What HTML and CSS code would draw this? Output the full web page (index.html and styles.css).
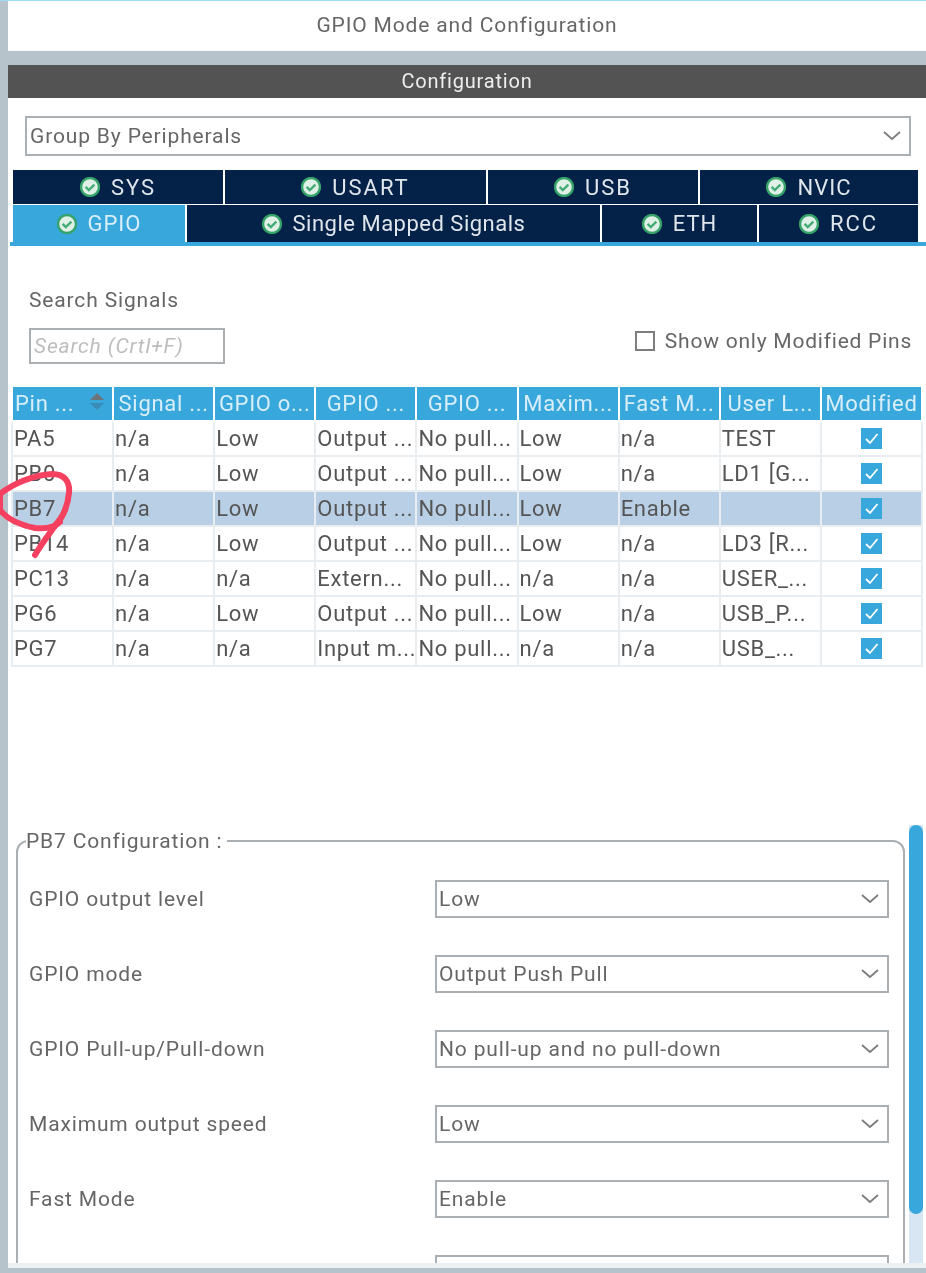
FILE: index.html
```html
<!DOCTYPE html>
<html>

<head>
    <title>GPIO Mode and Configuration</title>
    <link rel="stylesheet" href="styles.css">
</head>

<body>
    <svg class="defs" width="0" height="0">
        <symbol id="tab-check" viewBox="0 0 20 20">
            <circle cx="10" cy="10" r="9" fill="#dff0e6" stroke="#35a369" stroke-width="2.4" />
            <path d="M5.6 9.8l3.2 3.2 5.6-5.4" fill="none" stroke="#45ab76" stroke-width="2.4" />
        </symbol>
        <symbol id="chevron" viewBox="0 0 18 10">
            <path d="M1 1l8 7 8-7" fill="none" stroke="#7d7d7d" stroke-width="1.8" />
        </symbol>
        <symbol id="tick" viewBox="0 0 21 21">
            <rect width="21" height="21" fill="#37a7dc" />
            <path d="M5 11l4 4 7.5-9" fill="none" stroke="#fff" stroke-width="1.8" />
        </symbol>
    </svg>

    <div class="app">
        <div class="title">GPIO Mode and Configuration</div>
        <div class="config-head">Configuration</div>

        <div class="config">
            <div class="select group-select">
                <span>Group By Peripherals</span>
                <svg class="chevron"><use href="#chevron" /></svg>
            </div>

            <div class="tabs tabs-top">
                <div class="tab"><svg class="tab-icon"><use href="#tab-check" /></svg>SYS</div>
                <div class="tab"><svg class="tab-icon"><use href="#tab-check" /></svg>USART</div>
                <div class="tab"><svg class="tab-icon"><use href="#tab-check" /></svg>USB</div>
                <div class="tab tab-tight"><svg class="tab-icon"><use href="#tab-check" /></svg>NVIC</div>
            </div>
            <div class="tabs tabs-bottom">
                <div class="tab tab-tight active"><svg class="tab-icon"><use href="#tab-check" /></svg>GPIO</div>
                <div class="tab tab-long"><svg class="tab-icon"><use href="#tab-check" /></svg>Single Mapped Signals</div>
                <div class="tab tab-tight"><svg class="tab-icon"><use href="#tab-check" /></svg>ETH</div>
                <div class="tab"><svg class="tab-icon"><use href="#tab-check" /></svg>RCC</div>
            </div>
            <div class="tab-line"></div>

            <div class="search-row">
                <div>
                    <div class="search-label">Search Signals</div>
                    <div class="search-box">Search (Crtl+F)</div>
                </div>
                <div class="modified-toggle"><span class="checkbox"></span>Show only Modified Pins</div>
            </div>

            <table class="pins">
                <tr>
                    <th class="sort-head">Pin ...<span class="sort"><i class="up"></i><i class="down"></i></span></th>
                    <th>Signal ...</th>
                    <th>GPIO o...</th>
                    <th>GPIO ...</th>
                    <th>GPIO ...</th>
                    <th>Maxim...</th>
                    <th>Fast M...</th>
                    <th>User L...</th>
                    <th>Modified</th>
                </tr>
                <tr>
                    <td>PA5</td><td>n/a</td><td>Low</td><td>Output ...</td><td>No pull...</td><td>Low</td><td>n/a</td><td>TEST</td>
                    <td class="tick-cell"><svg class="tick"><use href="#tick" /></svg></td>
                </tr>
                <tr>
                    <td>PB0</td><td>n/a</td><td>Low</td><td>Output ...</td><td>No pull...</td><td>Low</td><td>n/a</td><td>LD1 [G...</td>
                    <td class="tick-cell"><svg class="tick"><use href="#tick" /></svg></td>
                </tr>
                <tr class="selected">
                    <td>PB7</td><td>n/a</td><td>Low</td><td>Output ...</td><td>No pull...</td><td>Low</td><td>Enable</td><td></td>
                    <td class="tick-cell"><svg class="tick"><use href="#tick" /></svg></td>
                </tr>
                <tr>
                    <td>PB14</td><td>n/a</td><td>Low</td><td>Output ...</td><td>No pull...</td><td>Low</td><td>n/a</td><td>LD3 [R...</td>
                    <td class="tick-cell"><svg class="tick"><use href="#tick" /></svg></td>
                </tr>
                <tr>
                    <td>PC13</td><td>n/a</td><td>n/a</td><td>Extern...</td><td>No pull...</td><td>n/a</td><td>n/a</td><td>USER_...</td>
                    <td class="tick-cell"><svg class="tick"><use href="#tick" /></svg></td>
                </tr>
                <tr>
                    <td>PG6</td><td>n/a</td><td>Low</td><td>Output ...</td><td>No pull...</td><td>Low</td><td>n/a</td><td>USB_P...</td>
                    <td class="tick-cell"><svg class="tick"><use href="#tick" /></svg></td>
                </tr>
                <tr>
                    <td>PG7</td><td>n/a</td><td>n/a</td><td>Input m...</td><td>No pull...</td><td>n/a</td><td>n/a</td><td>USB_...</td>
                    <td class="tick-cell"><svg class="tick"><use href="#tick" /></svg></td>
                </tr>
            </table>

            <div class="lower">
                <fieldset class="pin-config">
                    <legend>PB7 Configuration :</legend>
                    <div class="form-row">
                        <label>GPIO output level</label>
                        <div class="select"><span>Low</span><svg class="chevron"><use href="#chevron" /></svg></div>
                    </div>
                    <div class="form-row">
                        <label>GPIO mode</label>
                        <div class="select"><span>Output Push Pull</span><svg class="chevron"><use href="#chevron" /></svg></div>
                    </div>
                    <div class="form-row">
                        <label>GPIO Pull-up/Pull-down</label>
                        <div class="select"><span>No pull-up and no pull-down</span><svg class="chevron"><use href="#chevron" /></svg></div>
                    </div>
                    <div class="form-row">
                        <label>Maximum output speed</label>
                        <div class="select"><span>Low</span><svg class="chevron"><use href="#chevron" /></svg></div>
                    </div>
                    <div class="form-row">
                        <label>Fast Mode</label>
                        <div class="select"><span>Enable</span><svg class="chevron"><use href="#chevron" /></svg></div>
                    </div>
                    <div class="form-row">
                        <label></label>
                        <div class="select"></div>
                    </div>
                </fieldset>
                <div class="scroll-track"><div class="scroll-thumb"></div></div>
            </div>
        </div>
        <div class="bottom-edge"></div>

        <!-- red pen circle somebody drew around PB7 -->
        <svg class="scribble" width="90" height="100" viewBox="0 0 90 100">
            <path d="M0 26C14 15 34 7 52 6 65 6 70 14 69 25 68 37 63 49 57 55 50 65 42 75 35 87" />
            <path d="M0 26L0 42C8 52 20 57 35 60 45 61 55 59 60 54" />
        </svg>
    </div>
</body>

</html>
```

FILE: styles.css
```css
* {
    box-sizing: border-box;
}

html,
body {
    margin: 0;
    height: 1273px;
    overflow: hidden;
}

body {
    font-family: "Roboto", "Liberation Sans", sans-serif;
    font-size: 21px;
    letter-spacing: 0.85px;
    color: #666;
}

.defs {
    position: absolute;
}

/* the reference is an upscaled screenshot, soft all over */
.app {
    position: relative;
    display: flex;
    flex-direction: column;
    height: 1273px;
    padding-left: 8px;
    background: #b7c3ca;
    border-top: 1px solid #9fdcf7;
    overflow: hidden;
    filter: blur(0.45px);
}

.title {
    height: 50px;
    margin-bottom: 14px;
    line-height: 49px;
    text-align: center;
    background: #fff;
}

.config-head {
    height: 33px;
    line-height: 33px;
    font-size: 20px;
    letter-spacing: 0.8px;
    text-align: center;
    color: #eee;
    background: #525352;
}

.config {
    flex: 1;
    display: flex;
    flex-direction: column;
    min-height: 0;
    background: #fff;
}

.select {
    display: flex;
    align-items: center;
    justify-content: space-between;
    height: 38px;
    padding: 0 8px 0 2px;
    border: 2px solid #a9afb3;
    background: #fff;
}

.group-select {
    width: 886px;
    height: 40px;
    margin: 18px 0 0 17px;
    padding-left: 3px;
}

.chevron {
    width: 18px;
    height: 10px;
}

.tabs {
    display: grid;
    gap: 2px;
    width: 905px;
    margin-left: 5px;
}

.tabs-top {
    grid-template-columns: 210px 261px 210px 218px;
    height: 34px;
    margin-top: 14px;
    margin-bottom: 1px;
}

.tabs-bottom {
    grid-template-columns: 172px 413px 155px 159px;
    height: 37px;
}

.tab {
    display: flex;
    align-items: center;
    justify-content: center;
    gap: 11px;
    font-size: 22px;
    letter-spacing: 2px;
    color: #dfe6ec;
    background: #042148;
}

.tab-tight {
    letter-spacing: 1px;
}

.tab-long {
    letter-spacing: 0.5px;
}

.tab.active {
    color: #d8eef9;
    background: #37a7dc;
}

.tab-icon {
    width: 20px;
    height: 20px;
}

.tab-line {
    height: 4px;
    margin-left: 2px;
    background: #37a7dc;
}

.search-row {
    display: flex;
    justify-content: space-between;
    align-items: flex-end;
    padding: 41px 14px 0 21px;
}

.search-label {
    height: 26px;
    line-height: 26px;
    margin-bottom: 15px;
}

.search-box {
    width: 196px;
    height: 36px;
    padding-left: 3px;
    line-height: 33px;
    font-style: italic;
    color: #bdbdbd;
    border: 2px solid #a9afb3;
}

.modified-toggle {
    display: flex;
    align-items: center;
    gap: 10px;
    margin-bottom: 11px;
    letter-spacing: 0.77px;
}

.checkbox {
    width: 20px;
    height: 20px;
    border: 2px solid #7e7e7e;
}

.pins {
    width: 912px;
    margin: 23px 0 0 3px;
    border-collapse: collapse;
    table-layout: fixed;
    font-size: 22px;
    letter-spacing: 0.7px;
}

.pins th {
    height: 34px;
    padding: 0;
    font-weight: 400;
    text-align: center;
    color: #d8eef9;
    background: #37a7dc;
    border: 2px solid #fff;
    border-top: 0;
    white-space: nowrap;
    overflow: hidden;
}

.sort-head {
    position: relative;
}

.pins .sort-head {
    padding-left: 2px;
    text-align: left;
}

.sort {
    position: absolute;
    top: 6px;
    right: 8px;
}

.sort i {
    display: block;
    width: 0;
    height: 0;
    border-left: 7px solid transparent;
    border-right: 7px solid transparent;
}

.sort .up {
    margin-bottom: 3px;
    border-bottom: 7px solid #6d7378;
}

.sort .down {
    border-top: 7px solid #3a8bb5;
}

.pins td {
    height: 35px;
    padding: 0 0 0 1px;
    color: #555;
    border: 2px solid #e8edf2;
    white-space: nowrap;
    overflow: hidden;
}

.selected td {
    background: #b8cfe6;
}

.pins td.tick-cell {
    padding: 0;
}

.tick {
    display: block;
    width: 21px;
    height: 21px;
    margin: -1px auto 0;
}

.lower {
    flex: 1;
    display: flex;
    align-items: flex-start;
    min-height: 0;
    margin-top: 158px;
    overflow: hidden;
}

.pin-config {
    width: 889px;
    margin: 4px 0 0 8px;
    padding: 27px 14px 40px 11px;
    border: 2px solid #a9afb3;
    border-radius: 12px;
}

.pin-config legend {
    margin-left: -3px;
    padding: 0 4px 0 0;
    line-height: 24px;
}

.form-row {
    display: flex;
    align-items: center;
    justify-content: space-between;
    margin-bottom: 37px;
    height: 38px;
}

.form-row .select {
    width: 454px;
}

.scroll-track {
    align-self: stretch;
    width: 14px;
    margin-left: 4px;
    background: #d8e6f3;
}

.scroll-thumb {
    height: 389px;
    border-radius: 7px;
    background: #37a7dc;
}

.bottom-edge {
    height: 5px;
    margin-bottom: 5px;
    background: #eef1f3;
}

.scribble {
    position: absolute;
    top: 467px;
    left: 0;
    fill: none;
    stroke: #f5405f;
    stroke-width: 6;
    stroke-linecap: round;
}
```
